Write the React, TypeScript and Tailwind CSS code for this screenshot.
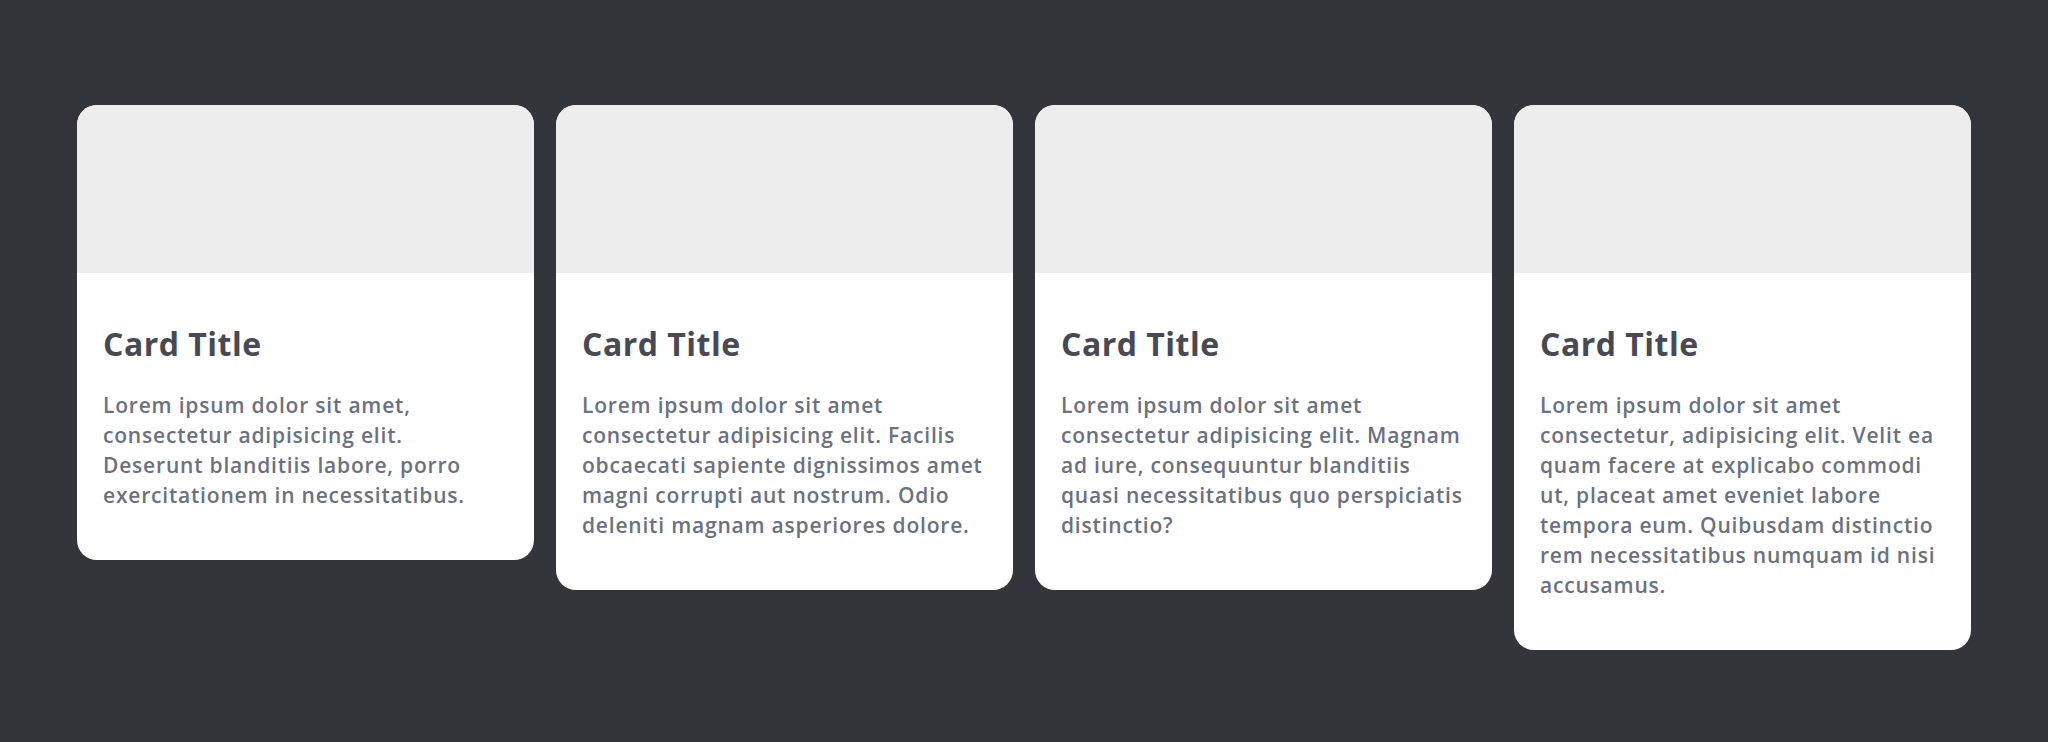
const cards = [
  {
    title: "Card Title",
    text: "Lorem ipsum dolor sit amet, consectetur adipisicing elit. Deserunt blanditiis labore, porro exercitationem in necessitatibus.",
  },
  {
    title: "Card Title",
    text: "Lorem ipsum dolor sit amet consectetur adipisicing elit. Facilis obcaecati sapiente dignissimos amet magni corrupti aut nostrum. Odio deleniti magnam asperiores dolore.",
  },
  {
    title: "Card Title",
    text: "Lorem ipsum dolor sit amet consectetur adipisicing elit. Magnam ad iure, consequuntur blanditiis quasi necessitatibus quo perspiciatis distinctio?",
  },
  {
    title: "Card Title",
    text: "Lorem ipsum dolor sit amet consectetur, adipisicing elit. Velit ea quam facere at explicabo commodi ut, placeat amet eveniet labore tempora eum. Quibusdam distinctio rem necessitatibus numquam id nisi accusamus.",
  },
];

function Card({ title, text }: { title: string; text: string }) {
  return (
    <div className="w-[457px] shrink-0 overflow-hidden rounded-[20px] bg-white">
      <div className="h-[168px] bg-[#ededed]" />
      <div className="px-[26px] pt-[52px] pb-[50px]">
        <h2 className="text-[32px] leading-[38px] font-bold tracking-[0.5px] text-[#474a54]">{title}</h2>
        <p className="mt-[27px] text-[21px] leading-[30px] font-semibold tracking-[0.8px] text-[#6a7180]">{text}</p>
      </div>
    </div>
  );
}

export default function App() {
  return (
    <div className="flex min-h-[742px] items-start justify-center gap-[22px] bg-[#32363a] pt-[105px] font-['Open_Sans',sans-serif]">
      {cards.map((c, i) => (
        <Card key={i} title={c.title} text={c.text} />
      ))}
    </div>
  );
}
